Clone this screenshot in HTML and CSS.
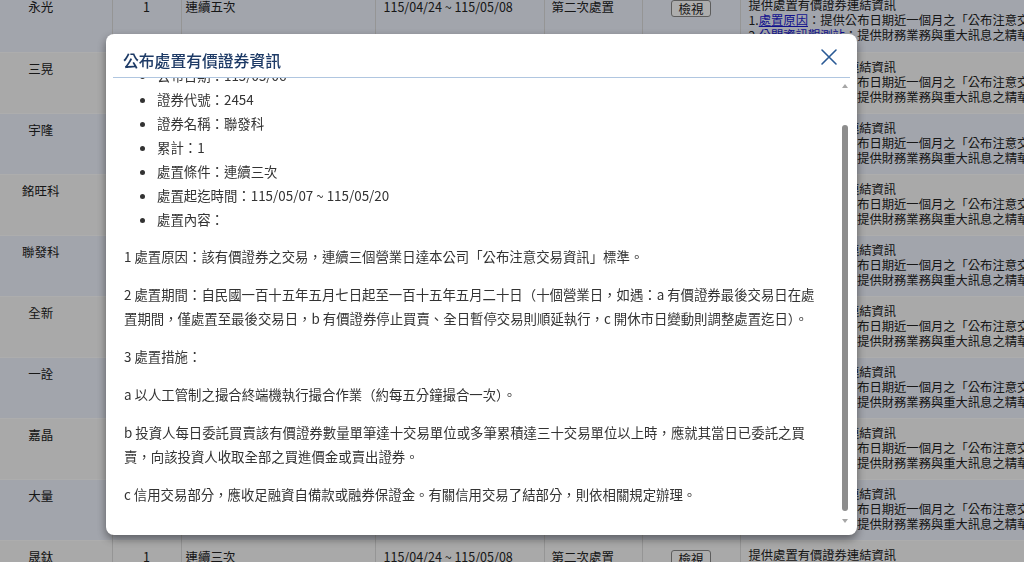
FILE: index.html
```html
<!DOCTYPE html>
<html lang="zh-Hant">
<head>
<meta charset="utf-8">
<title>公布處置有價證券資訊</title>
<link rel="stylesheet" href="styles.css">
</head>
<body>
<div class="page">
  <table class="list">
    <colgroup>
      <col class="c1"><col class="c2"><col class="c3"><col class="c4"><col class="c5"><col class="c6"><col class="c7">
    </colgroup>
    <tbody>
      <tr class="alt"><td class="name">永光</td><td class="num">1</td><td class="cond">連續五次</td><td class="date">115/04/24 ~ 115/05/08</td><td class="stage">第二次處置</td><td class="act"><button class="view">檢視</button></td><td class="info"><div>提供處置有價證券連結資訊</div><div>1.<a href="#">處置原因</a>：提供公布日期近一個月之「公布注意交易資訊」</div><div>2.<a href="#">公開資訊觀測站</a>：提供財務業務與重大訊息之精華</div></td></tr>
      <tr><td class="name">三晃</td><td class="num">1</td><td class="cond">連續三次</td><td class="date">115/04/27 ~ 115/05/08</td><td class="stage">第一次處置</td><td class="act"><button class="view">檢視</button></td><td class="info"><div>提供處置有價證券連結資訊</div><div>1.<a href="#">處置原因</a>：提供公布日期近一個月之「公布注意交易資訊」</div><div>2.<a href="#">公開資訊觀測站</a>：提供財務業務與重大訊息之精華</div></td></tr>
      <tr class="alt"><td class="name">宇隆</td><td class="num">1</td><td class="cond">連續三次</td><td class="date">115/05/04 ~ 115/05/15</td><td class="stage">第一次處置</td><td class="act"><button class="view">檢視</button></td><td class="info"><div>提供處置有價證券連結資訊</div><div>1.<a href="#">處置原因</a>：提供公布日期近一個月之「公布注意交易資訊」</div><div>2.<a href="#">公開資訊觀測站</a>：提供財務業務與重大訊息之精華</div></td></tr>
      <tr><td class="name">銘旺科</td><td class="num">1</td><td class="cond">連續三次</td><td class="date">115/05/05 ~ 115/05/18</td><td class="stage">第一次處置</td><td class="act"><button class="view">檢視</button></td><td class="info"><div>提供處置有價證券連結資訊</div><div>1.<a href="#">處置原因</a>：提供公布日期近一個月之「公布注意交易資訊」</div><div>2.<a href="#">公開資訊觀測站</a>：提供財務業務與重大訊息之精華</div></td></tr>
      <tr class="alt"><td class="name">聯發科</td><td class="num">1</td><td class="cond">連續三次</td><td class="date">115/05/07 ~ 115/05/20</td><td class="stage">第一次處置</td><td class="act"><button class="view">檢視</button></td><td class="info"><div>提供處置有價證券連結資訊</div><div>1.<a href="#">處置原因</a>：提供公布日期近一個月之「公布注意交易資訊」</div><div>2.<a href="#">公開資訊觀測站</a>：提供財務業務與重大訊息之精華</div></td></tr>
      <tr><td class="name">全新</td><td class="num">1</td><td class="cond">連續三次</td><td class="date">115/05/07 ~ 115/05/20</td><td class="stage">第一次處置</td><td class="act"><button class="view">檢視</button></td><td class="info"><div>提供處置有價證券連結資訊</div><div>1.<a href="#">處置原因</a>：提供公布日期近一個月之「公布注意交易資訊」</div><div>2.<a href="#">公開資訊觀測站</a>：提供財務業務與重大訊息之精華</div></td></tr>
      <tr class="alt"><td class="name">一詮</td><td class="num">1</td><td class="cond">連續三次</td><td class="date">115/05/07 ~ 115/05/20</td><td class="stage">第一次處置</td><td class="act"><button class="view">檢視</button></td><td class="info"><div>提供處置有價證券連結資訊</div><div>1.<a href="#">處置原因</a>：提供公布日期近一個月之「公布注意交易資訊」</div><div>2.<a href="#">公開資訊觀測站</a>：提供財務業務與重大訊息之精華</div></td></tr>
      <tr><td class="name">嘉晶</td><td class="num">1</td><td class="cond">連續三次</td><td class="date">115/05/07 ~ 115/05/20</td><td class="stage">第一次處置</td><td class="act"><button class="view">檢視</button></td><td class="info"><div>提供處置有價證券連結資訊</div><div>1.<a href="#">處置原因</a>：提供公布日期近一個月之「公布注意交易資訊」</div><div>2.<a href="#">公開資訊觀測站</a>：提供財務業務與重大訊息之精華</div></td></tr>
      <tr class="alt"><td class="name">大量</td><td class="num">1</td><td class="cond">連續三次</td><td class="date">115/05/07 ~ 115/05/20</td><td class="stage">第一次處置</td><td class="act"><button class="view">檢視</button></td><td class="info"><div>提供處置有價證券連結資訊</div><div>1.<a href="#">處置原因</a>：提供公布日期近一個月之「公布注意交易資訊」</div><div>2.<a href="#">公開資訊觀測站</a>：提供財務業務與重大訊息之精華</div></td></tr>
      <tr><td class="name">晟鈦</td><td class="num">1</td><td class="cond">連續三次</td><td class="date">115/04/24 ~ 115/05/08</td><td class="stage">第二次處置</td><td class="act"><button class="view">檢視</button></td><td class="info"><div>提供處置有價證券連結資訊</div><div>1.<a href="#">處置原因</a>：提供公布日期近一個月之「公布注意交易資訊」</div><div>2.<a href="#">公開資訊觀測站</a>：提供財務業務與重大訊息之精華</div></td></tr>
    </tbody>
  </table>
</div>

<div class="backdrop"></div>

<div class="modal" role="dialog">
  <div class="modal-header">
    <h4 class="modal-title">公布處置有價證券資訊</h4>
    <button class="close" aria-label="關閉">
      <svg width="18" height="18" viewBox="0 0 18 18"><path d="M2 2 L16 16 M16 2 L2 16" stroke="#2a5a95" stroke-width="1.6" fill="none" stroke-linecap="round"/></svg>
    </button>
  </div>
  <div class="modal-body">
    <div class="scroller" id="modalBody">
      <ul class="facts">
        <li>公布日期：115/05/06</li>
        <li>證券代號：2454</li>
        <li>證券名稱：聯發科</li>
        <li>累計：1</li>
        <li>處置條件：連續三次</li>
        <li>處置起迄時間：115/05/07 ~ 115/05/20</li>
        <li>處置內容：</li>
      </ul>
      <p>1 處置原因：該有價證券之交易，連續三個營業日達本公司「公布注意交易資訊」標準。</p>
      <p>2 處置期間：自民國一百十五年五月七日起至一百十五年五月二十日（十個營業日，如遇：a 有價證券最後交易日在處置期間，僅處置至最後交易日，b 有價證券停止買賣、全日暫停交易則順延執行，c 開休市日變動則調整處置迄日）。</p>
      <p>3 處置措施：</p>
      <p>a 以人工管制之撮合終端機執行撮合作業（約每五分鐘撮合一次）。</p>
      <p>b 投資人每日委託買賣該有價證券數量單筆達十交易單位或多筆累積達三十交易單位以上時，應就其當日已委託之買賣，向該投資人收取全部之買進價金或賣出證券。</p>
      <p>c 信用交易部分，應收足融資自備款或融券保證金。有關信用交易了結部分，則依相關規定辦理。</p>
    </div>
    <div class="rail" aria-hidden="true">
      <div class="rail-btn"><span class="arrow-up"></span></div>
      <div class="rail-track"><div class="rail-thumb"></div></div>
      <div class="rail-btn"><span class="arrow-down"></span></div>
    </div>
  </div>
</div>
<script src="script.js"></script>
</body>
</html>
```

FILE: styles.css
```css
html, body {
  margin: 0;
  padding: 0;
  width: 1024px;
  height: 562px;
  overflow: hidden;
  background: #fafafa;
  font-family: "Noto Sans CJK TC", "Noto Sans", sans-serif;
}

.page {
  width: 1024px;
  height: 562px;
  overflow: hidden;
}

.list {
  border-collapse: collapse;
  table-layout: fixed;
  width: 1140px;
  margin-top: -9px;
  font-size: 12.5px;
  color: #222;
}

.list col.c1 { width: 112px; }
.list col.c2 { width: 69px; }
.list col.c3 { width: 194px; }
.list col.c4 { width: 169px; }
.list col.c5 { width: 98px; }
.list col.c6 { width: 98px; }
.list col.c7 { width: 400px; }

.list tr {
  height: 61px;
  background: #fafafa;
  border-bottom: 1px solid #ffffff;
}

.list tr.alt {
  background: #eff3fe;
}

.list td {
  vertical-align: top;
  padding: 7px 8px 0;
  line-height: 18px;
  border-left: 1px solid #dcdcdc;
  white-space: nowrap;
  overflow: hidden;
}

.list td.name {
  text-align: center;
  padding-right: 38px;
  border-left: none;
}

.list td.num { text-align: center; }
.list td.cond { padding-left: 4px; }
.list td.date { padding-left: 8px; }
.list td.stage { padding-left: 7px; }
.list td.act { text-align: center; padding-top: 9px; }

.view {
  display: inline-block;
  font-family: inherit;
  font-size: 12.5px;
  line-height: 15px;
  padding: 0 6px;
  color: #222;
  background: #ffffff;
  border: 1px solid #8a8a8a;
  border-radius: 3px;
  vertical-align: top;
}

.list td.info {
  line-height: 15px;
  padding-left: 8px;
  padding-top: 7px;
  font-size: 12.3px;
}

.info a {
  color: #1a1ad0;
  text-decoration: underline;
}

.backdrop {
  position: fixed;
  inset: 0;
  background: rgba(0, 0, 0, 0.32);
}

.modal {
  position: fixed;
  left: 106px;
  top: 34px;
  width: 751px;
  height: 501px;
  background: #ffffff;
  border-radius: 8px;
  box-shadow: 0 4px 10px rgba(0, 0, 0, 0.45);
  display: flex;
  flex-direction: column;
}

.modal-header {
  margin: 0 7px;
  padding: 17px 11px 6px 10px;
  border-bottom: 1px solid #b0c6e0;
  display: flex;
  justify-content: space-between;
  align-items: flex-start;
}

.modal-title {
  margin: 0;
  font-size: 15.8px;
  line-height: 20px;
  font-weight: 500;
  color: #1d3a66;
}

.close {
  width: 20px;
  height: 20px;
  margin-top: -4px;
  padding: 1px;
  border: none;
  background: transparent;
  display: flex;
  align-items: center;
  justify-content: center;
}

.modal-body {
  flex: 1;
  min-height: 0;
  margin: 0 7px 7px;
  display: flex;
}

.scroller {
  flex: 1;
  min-width: 0;
  padding: 20px 13px 8px 11px;
  overflow-y: auto;
  scrollbar-width: none;
  font-size: 13.4px;
  line-height: 24px;
  color: #333;
}

.scroller::-webkit-scrollbar {
  display: none;
}

.rail {
  width: 11px;
  display: flex;
  flex-direction: column;
  background: #ffffff;
}

.rail-btn {
  height: 15px;
  display: flex;
  align-items: center;
  justify-content: center;
}

.arrow-up {
  width: 0;
  height: 0;
  border-left: 3.5px solid transparent;
  border-right: 3.5px solid transparent;
  border-bottom: 4px solid #a6a6a6;
}

.arrow-down {
  width: 0;
  height: 0;
  border-left: 3.5px solid transparent;
  border-right: 3.5px solid transparent;
  border-top: 4px solid #a6a6a6;
}

.rail-track {
  flex: 1;
  display: flex;
  flex-direction: column;
  align-items: center;
}

.rail-thumb {
  width: 6px;
  height: 386px;
  margin-top: 32px;
  border-radius: 3px;
  background: #8d8d8d;
}

.facts {
  margin: 0 0 13px;
  padding-left: 33px;
}

.scroller p {
  margin: 0 0 14px;
}
```

FILE: script.js
```js
var body = document.getElementById('modalBody');
body.scrollTop = body.scrollHeight;
```
